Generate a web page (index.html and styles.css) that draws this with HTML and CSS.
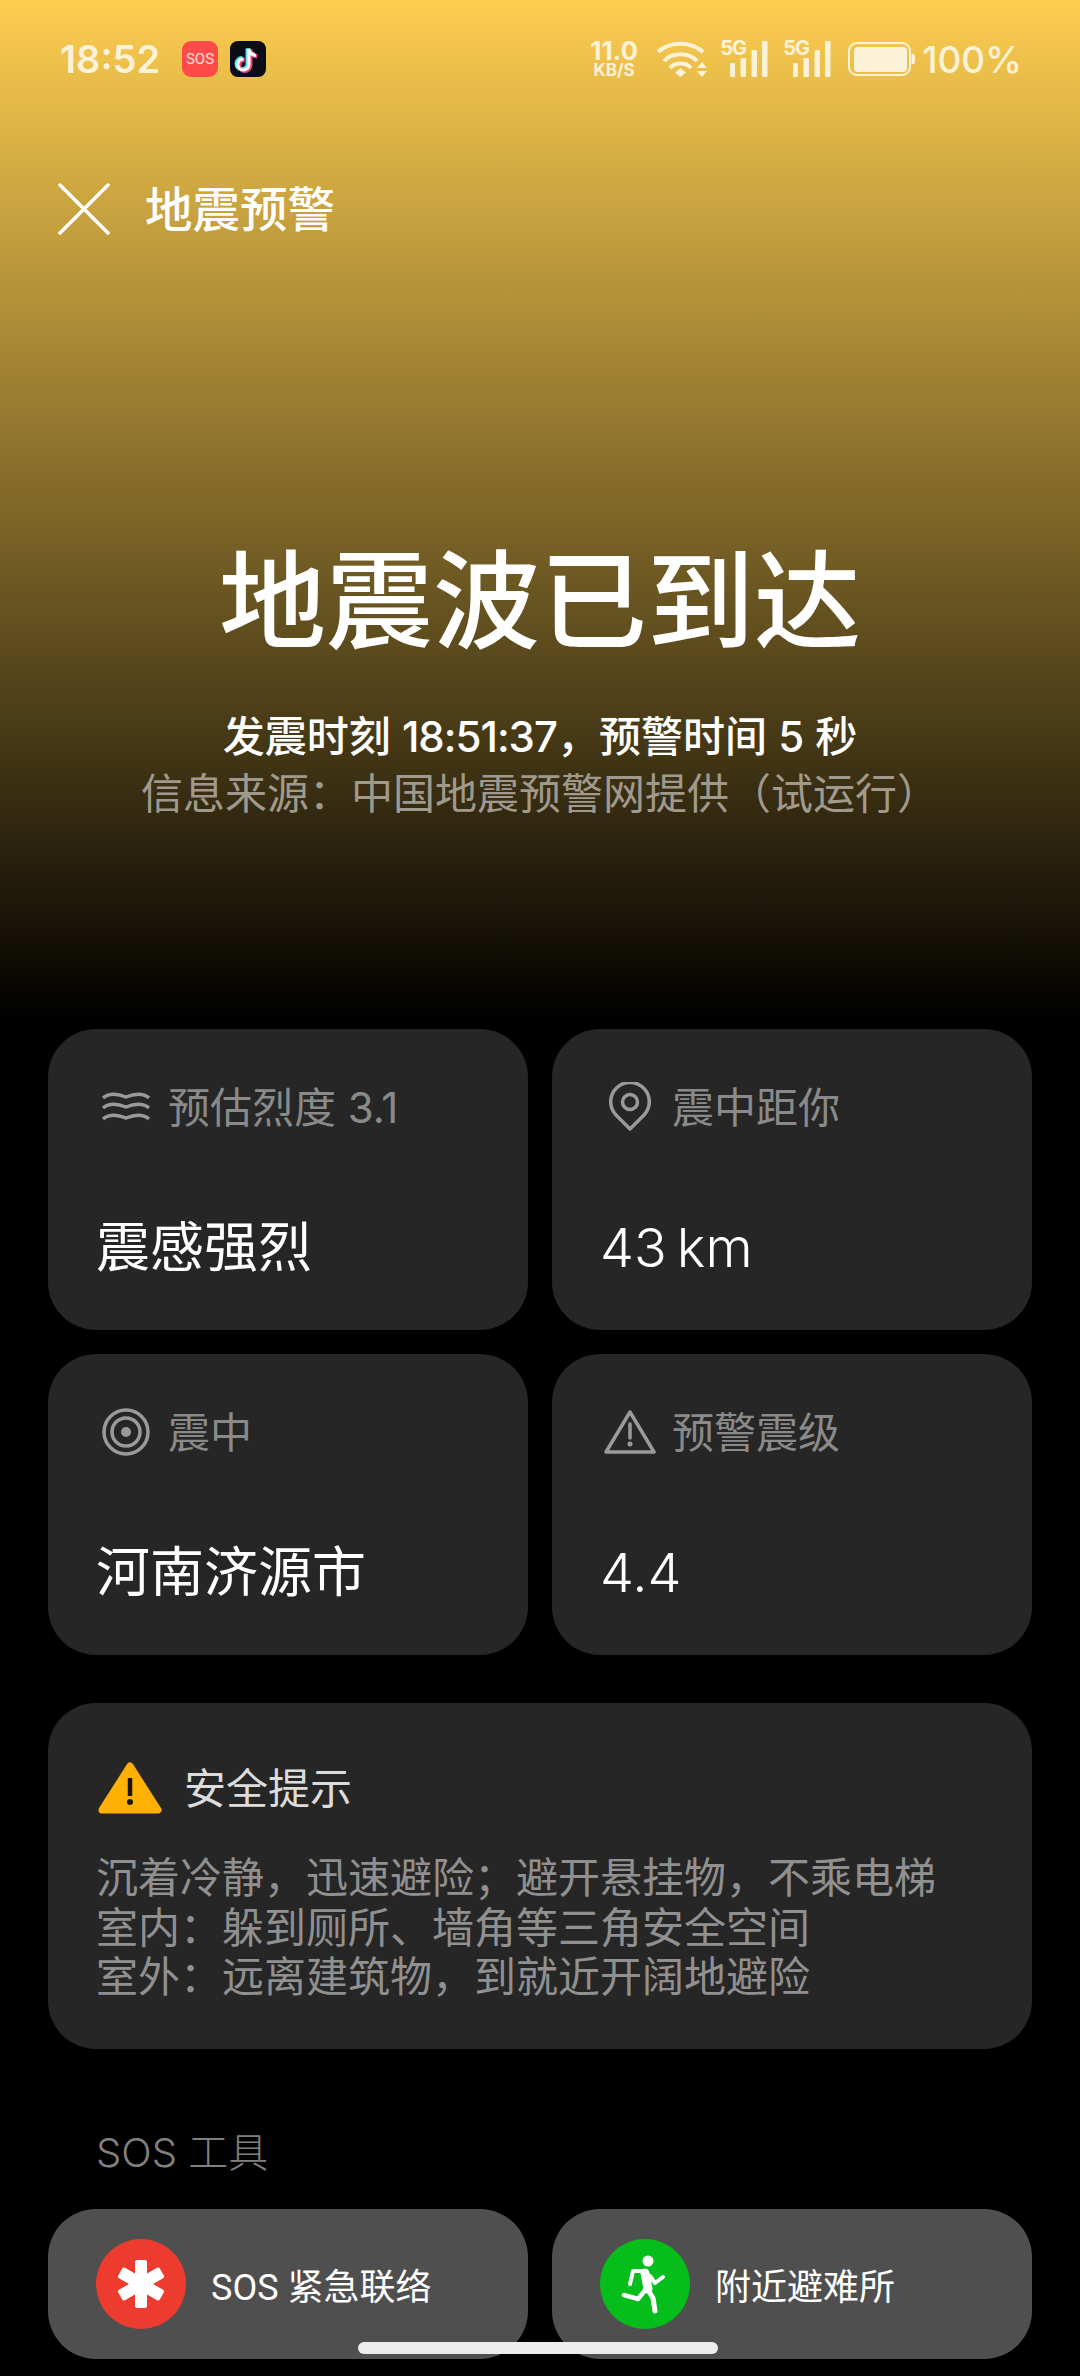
FILE: index.html
```html
<!DOCTYPE html>
<html lang="zh-CN">
<head>
    <meta charset="UTF-8">
    <meta name="viewport" content="width=device-width, initial-scale=1.0">
    <title>地震预警</title>
    <link rel="stylesheet" href="styles.css">
</head>
<body>
    <div class="hero">
        <div class="status-bar">
            <span class="time">18:52</span>
            <span class="badge-sos">SOS</span>
            <svg class="badge-app" width="36" height="36" viewBox="0 0 36 36">
                <rect width="36" height="36" rx="8" fill="#0a0c18"/>
                <g fill="none" stroke-width="4.5">
                    <path d="M19 8v15.500a5.500 5.500 0 1 1-5.500-5.500M19 8c.5 3.500 3 6 7 6.500" stroke="#5fe6ee" transform="translate(-1.200 -.8)"/>
                    <path d="M19 8v15.500a5.500 5.500 0 1 1-5.500-5.500M19 8c.5 3.500 3 6 7 6.500" stroke="#f0436a" transform="translate(1.200 .8)"/>
                    <path d="M19 8v15.500a5.500 5.500 0 1 1-5.500-5.500M19 8c.5 3.500 3 6 7 6.500" stroke="#fff" stroke-width="3"/>
                </g>
            </svg>
            <div class="status-right">
                <div class="speed">
                    <span class="speed-num">11.0</span>
                    <span class="speed-unit">KB/S</span>
                </div>
                <svg class="wifi" width="51" height="36" viewBox="0 0 51 36" fill="none" stroke="#fcf2d8" stroke-width="4">
                    <path d="M2 11C14 0 35 0 47 11"/>
                    <path d="M8 20C16 11 33 11 41 20"/>
                    <path d="M14 27C19 21 30 21 35 27"/>
                    <path d="M24.500 27L30 31.500L24.500 36L19 31.500Z" fill="#fcf2d8" stroke="none"/>
                    <path d="M46 21L51 27H41ZM41 30H51L46 36Z" fill="#fcf2d8" stroke="none"/>
                </svg>
                <div class="signal">
                    <span class="net-label">5G</span>
                    <svg width="48" height="36" viewBox="0 0 48 36" fill="#fcf2d8">
                        <rect x="10" y="22" width="5" height="14" rx="1"/>
                        <rect x="20.500" y="17" width="5.500" height="19" rx="1"/>
                        <rect x="31.500" y="9" width="5.500" height="27" rx="1"/>
                        <rect x="42" y="0" width="5.500" height="36" rx="1"/>
                    </svg>
                </div>
                <div class="signal">
                    <span class="net-label">5G</span>
                    <svg width="48" height="36" viewBox="0 0 48 36" fill="#fcf2d8">
                        <rect x="10" y="22" width="5" height="14" rx="1"/>
                        <rect x="20.500" y="17" width="5.500" height="19" rx="1"/>
                        <rect x="31.500" y="9" width="5.500" height="27" rx="1"/>
                        <rect x="42" y="0" width="5.500" height="36" rx="1"/>
                    </svg>
                </div>
                <svg class="battery" width="67" height="34" viewBox="0 0 67 34" fill="#fcf2d8">
                    <rect x="1" y="1" width="61" height="32" rx="8" fill="none" stroke="#fcf2d8" stroke-width="2"/>
                    <rect x="6" y="5" width="53" height="25" rx="4"/>
                    <path d="M63.500 12H65a2 2 0 0 1 2 2V20a2 2 0 0 1-2 2H63.500Z"/>
                </svg>
                <span class="percent">100%</span>
            </div>
        </div>

        <div class="top-bar">
            <svg width="52" height="52" viewBox="0 0 52 52" stroke="#fff" stroke-width="3.500" stroke-linecap="round">
                <path d="M2 2L50 50M50 2L2 50"/>
            </svg>
            <span class="top-title">地震预警</span>
        </div>

        <div class="alert">
            <h1>地震波已到达</h1>
            <p class="alert-time">发震时刻 <span class="clock">18:51:37</span>，预警时间 5 秒</p>
            <p class="alert-source">信息来源：中国地震预警网提供（试运行）</p>
        </div>
    </div>

    <div class="info-grid">
        <div class="card">
            <div class="card-label">
                <span class="label-icon">
                    <svg width="48" height="30" viewBox="0 0 48 30" fill="none" stroke="#9a9a9a" stroke-width="3.500">
                        <path d="M1 6C7 1 14 1 24 5C34 1 41 1 47 6"/>
                        <path d="M1 16C7 11 14 11 24 15C34 11 41 11 47 16"/>
                        <path d="M1 27C7 22 14 22 24 26C34 22 41 22 47 27"/>
                    </svg>
                </span>
                <span class="label-text">预估烈度 3.1</span>
            </div>
            <div class="card-value">震感强烈</div>
        </div>
        <div class="card">
            <div class="card-label">
                <span class="label-icon">
                    <svg width="42" height="50" viewBox="0 0 42 50" fill="none" stroke="#9a9a9a" stroke-width="3.500">
                        <path d="M21 47L7 33A19.300 19.300 0 1 1 35 33Z" stroke-linejoin="round"/>
                        <circle cx="21" cy="20" r="7.500"/>
                    </svg>
                </span>
                <span class="label-text">震中距你</span>
            </div>
            <div class="card-value value-num">43 km</div>
        </div>
        <div class="card">
            <div class="card-label">
                <span class="label-icon">
                    <svg width="48" height="48" viewBox="0 0 48 48" fill="none" stroke="#9a9a9a" stroke-width="3.500">
                        <circle cx="24" cy="24" r="22"/>
                        <circle cx="24" cy="24" r="14"/>
                        <circle cx="24" cy="24" r="5" fill="#9a9a9a" stroke="none"/>
                    </svg>
                </span>
                <span class="label-text">震中</span>
            </div>
            <div class="card-value">河南济源市</div>
        </div>
        <div class="card">
            <div class="card-label">
                <span class="label-icon">
                    <svg width="52" height="44" viewBox="0 0 52 44" fill="none" stroke="#9a9a9a" stroke-width="3.500" stroke-linejoin="round">
                        <path d="M26 2L50 42H2Z"/>
                        <path d="M26 14V28" stroke-linecap="round"/>
                        <circle cx="26" cy="34" r="2.500" fill="#9a9a9a" stroke="none"/>
                    </svg>
                </span>
                <span class="label-text">预警震级</span>
            </div>
            <div class="card-value value-num">4.4</div>
        </div>
    </div>

    <div class="card tips">
        <div class="tips-head">
            <svg width="64" height="54" viewBox="0 0 64 54">
                <path d="M32 5L60 49H4Z" fill="#ffb000" stroke="#ffb000" stroke-width="7" stroke-linejoin="round"/>
                <path d="M32 17V35" stroke="#1a1408" stroke-width="4.500"/>
                <circle cx="32" cy="41" r="3" fill="#1a1408"/>
            </svg>
            <span class="label-text">安全提示</span>
        </div>
        <div class="tips-body">
            <div>沉着冷静，迅速避险；避开悬挂物，不乘电梯</div>
            <div>室内：躲到厕所、墙角等三角安全空间</div>
            <div>室外：远离建筑物，到就近开阔地避险</div>
        </div>
    </div>

    <div class="section-title">SOS 工具</div>

    <div class="tools">
        <div class="tool">
            <span class="tool-icon tool-red">
                <svg width="52" height="52" viewBox="0 0 52 52" fill="#fff">
                    <rect x="20" y="2" width="12" height="48" rx="2"/>
                    <rect x="20" y="2" width="12" height="48" rx="2" transform="rotate(60 26 26)"/>
                    <rect x="20" y="2" width="12" height="48" rx="2" transform="rotate(120 26 26)"/>
                </svg>
            </span>
            <span>SOS 紧急联络</span>
        </div>
        <div class="tool">
            <span class="tool-icon tool-green">
                <svg width="90" height="90" viewBox="0 0 90 90" fill="none" stroke="#fff" stroke-linecap="round" stroke-linejoin="round">
                    <circle cx="48" cy="22" r="5.500" fill="#fff" stroke="none"/>
                    <path d="M45 34L48 50" stroke-width="9"/>
                    <path d="M44 32H33L30 45" stroke-width="4"/>
                    <path d="M50 37L55 44L63 38" stroke-width="4"/>
                    <path d="M46 50L38 60L24 56" stroke-width="4.500"/>
                    <path d="M48 51L53 59L55 72" stroke-width="5"/>
                </svg>
            </span>
            <span>附近避难所</span>
        </div>
    </div>

    <div class="home-bar"></div>
</body>
</html>
```

FILE: styles.css
```css
* {
    margin: 0;
    padding: 0;
    box-sizing: border-box;
}

body {
    position: relative;
    width: 1080px;
    height: 2376px;
    overflow: hidden;
    background-color: #000;
    color: #fff;
    font-family: Inter, "Noto Sans CJK SC", sans-serif;
}

.hero {
    height: 1029px;
    background: linear-gradient(180deg, #fdcd50 0, #000 1020px);
}

/* status bar */
.status-bar {
    display: flex;
    align-items: center;
    height: 118px;
    padding: 0 58px 0 60px;
    color: #fcf2d8;
}

.time {
    font-size: 38px;
    font-weight: 600;
    width: 122px;
}

.badge-sos {
    display: flex;
    align-items: center;
    justify-content: center;
    width: 36px;
    height: 36px;
    margin-right: 12px;
    border-radius: 9px;
    background-color: #ff4a4a;
    color: #fde0d8;
    font-family: Roboto, sans-serif;
    font-size: 15px;
}

.status-right {
    display: flex;
    align-items: center;
    gap: 15px;
    margin-left: auto;
}

.speed {
    display: flex;
    flex-direction: column;
    align-items: center;
    width: 50px;
    font-weight: 700;
}

.speed-num {
    font-size: 26px;
    line-height: 22px;
}

.speed-unit {
    font-size: 17px;
    line-height: 16px;
}

.wifi {
    margin-left: 2px;
    margin-right: -2px;
}

.signal {
    position: relative;
    width: 48px;
    height: 36px;
}

.net-label {
    position: absolute;
    left: 0;
    top: -3px;
    font-size: 20px;
    font-weight: 700;
    line-height: 20px;
    letter-spacing: -1px;
}

.battery {
    margin-left: 2px;
}

.percent {
    margin-left: -8px;
    font-size: 37px;
    font-weight: 500;
}

/* title row */
.top-bar {
    display: flex;
    align-items: center;
    gap: 35px;
    height: 62px;
    margin-top: 60px;
    padding-left: 58px;
}

.top-title {
    padding-bottom: 6px;
    font-size: 47.500px;
    font-weight: 500;
}

.alert {
    margin-top: 301px;
    text-align: center;
}

.alert h1 {
    font-size: 107px;
    font-weight: 500;
    line-height: 120px;
    margin-bottom: 47px;
}

.alert-time,
.alert-source {
    font-size: 42px;
    line-height: 57px;
}

.alert-time {
    font-weight: 500;
}

.clock {
    letter-spacing: -1px;
}

.alert-source {
    color: #a09a8e;
}

/* cards */
.info-grid {
    display: grid;
    grid-template-columns: 480px 480px;
    grid-auto-rows: 301px;
    gap: 24px;
    padding: 0 48px;
}

.card {
    background-color: #262626;
    border-radius: 48px;
    padding: 53px 48px 0;
}

.card-label {
    display: flex;
    align-items: center;
    gap: 12px;
    height: 50px;
    color: #8a8a8a;
    font-size: 42px;
}

.label-text {
    padding-bottom: 6px;
}

.label-icon {
    display: flex;
    align-items: center;
    justify-content: center;
    width: 60px;
}

.card-value {
    margin-top: 81px;
    font-size: 54px;
    line-height: 70px;
}

.value-num {
    font-weight: 300;
    word-spacing: -5px;
}

.tips {
    margin: 48px 48px 0;
    height: 346px;
}

.tips-head {
    display: flex;
    align-items: center;
    gap: 22px;
    height: 64px;
    padding-left: 2px;
    color: #dcdcdc;
    font-size: 42px;
}

.tips-body {
    margin-top: 33px;
    color: #909090;
    font-size: 42px;
    line-height: 49.500px;
}

.section-title {
    margin-top: 79px;
    padding-left: 96px;
    color: #808080;
    font-size: 40px;
    font-weight: 300;
    line-height: 50px;
}

.tools {
    display: grid;
    grid-template-columns: 480px 480px;
    gap: 24px;
    margin-top: 31px;
    padding: 0 48px;
}

.tool {
    display: flex;
    align-items: center;
    gap: 25px;
    height: 150px;
    padding-left: 48px;
    border-radius: 48px;
    background-color: #4f4f4f;
    font-family: Roboto, "Noto Sans CJK SC", sans-serif;
    font-size: 36px;
}

.tool-icon {
    display: flex;
    align-items: center;
    justify-content: center;
    width: 90px;
    height: 90px;
    border-radius: 50%;
}

.tool-red {
    background-color: #ee3b2f;
}

.tool-green {
    background-color: #05bd1b;
}

.home-bar {
    position: absolute;
    left: 358px;
    top: 2342px;
    width: 360px;
    height: 12px;
    border-radius: 6px;
    background-color: #ececec;
}
```
